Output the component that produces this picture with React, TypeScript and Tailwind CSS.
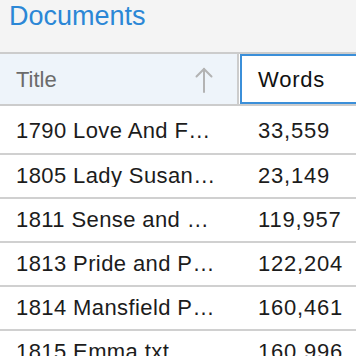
const rows = [
  { title: '1790 Love And Freindship.txt', words: '33,559' },
  { title: '1805 Lady Susan.txt', words: '23,149' },
  { title: '1811 Sense and Sensibility.txt', words: '119,957' },
  { title: '1813 Pride and Prejudice.txt', words: '122,204' },
  { title: '1814 Mansfield Park.txt', words: '160,461' },
  { title: '1815 Emma.txt', words: '160,996' },
];

const SortArrow = () => (
  <svg width="18" height="26" viewBox="0 0 18 26" fill="none" stroke="#b3b3b3" strokeWidth="2" strokeLinecap="round">
    <path d="M9 2v23" />
    <path d="M1.5 9.5L9 2l7.5 7.5" />
  </svg>
);

export default function App() {
  return (
    <div className="w-[356px] h-[356px] overflow-hidden bg-white font-['Liberation_Sans',Arial,sans-serif]">
      <div className="h-[54px] bg-[#f4f4f4] border-b-2 border-[#cccccc] pl-[9px] pt-[3px]">
        <h1 className="text-[27px] leading-[27px] text-[#2b87d6]">Documents</h1>
      </div>

      <div className="flex h-[52px] border-b-2 border-[#cccccc] bg-white">
        <div className="w-[239px] shrink-0 flex items-center justify-between bg-[#eef4fa] border-r-2 border-[#cccccc] pl-4 pr-[24px] pt-[2px]">
          <span className="text-[22px] leading-[22px] text-[#6b6b6b]">Title</span>
          <SortArrow />
        </div>
        <div className="ml-px -mr-[6px] flex-1 flex items-center border-2 border-[#3b8fd9] pl-4 pt-[2px]">
          <span className="text-[22px] leading-[22px] tracking-[0.8px] text-[#111]">Words</span>
        </div>
      </div>

      {rows.map((row, i) => (
        <div
          key={row.title}
          className={`flex items-center border-b-2 border-[#d0d0d0] text-[22px] leading-[22px] text-[#1c1c1c] ${
            i === 0 ? 'h-[49px] pt-[3px]' : 'h-[44px]'
          }`}
        >
          <div className="w-[240px] shrink-0 pl-4 pr-[22px] truncate tracking-[0.4px]">{row.title}</div>
          <div className="pl-[18px] whitespace-nowrap tracking-[0.8px]">{row.words}</div>
        </div>
      ))}
    </div>
  );
}
